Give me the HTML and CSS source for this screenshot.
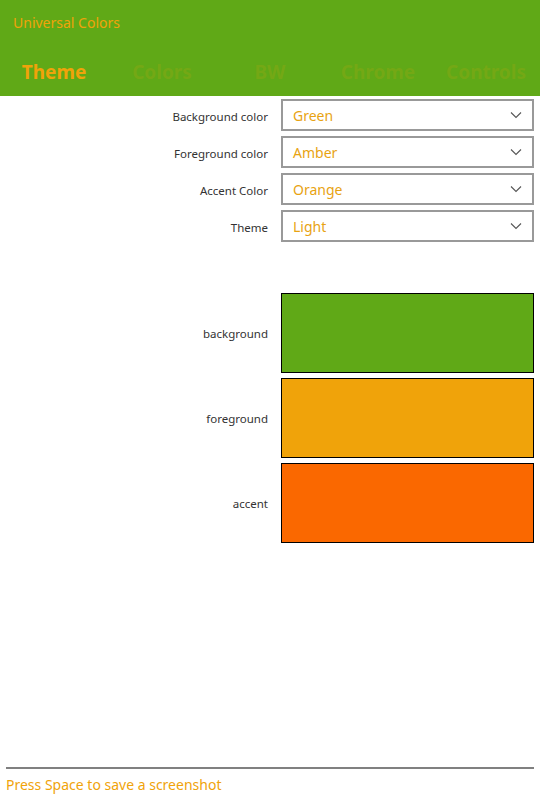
FILE: index.html
```html
<!DOCTYPE html>
<html lang="en">
<head>
  <meta charset="UTF-8">
  <meta name="viewport" content="width=device-width, initial-scale=1.0">
  <title>Universal Colors</title>
  <link rel="stylesheet" href="styles.css">
</head>
<body>
  <div class="app">
    <header class="header">
      <div class="title">Universal Colors</div>
      <nav class="tabs">
        <span class="tab active">Theme</span>
        <span class="tab">Colors</span>
        <span class="tab">BW</span>
        <span class="tab">Chrome</span>
        <span class="tab">Controls</span>
      </nav>
    </header>

    <main class="content">
      <div class="form">
        <label class="label">Background color</label>
        <div class="combo"><span>Green</span><svg class="chevron" viewBox="0 0 12 8"><path d="M1 1.5 L6 6.5 L11 1.5" /></svg></div>
        <label class="label">Foreground color</label>
        <div class="combo"><span>Amber</span><svg class="chevron" viewBox="0 0 12 8"><path d="M1 1.5 L6 6.5 L11 1.5" /></svg></div>
        <label class="label">Accent Color</label>
        <div class="combo"><span>Orange</span><svg class="chevron" viewBox="0 0 12 8"><path d="M1 1.5 L6 6.5 L11 1.5" /></svg></div>
        <label class="label">Theme</label>
        <div class="combo"><span>Light</span><svg class="chevron" viewBox="0 0 12 8"><path d="M1 1.5 L6 6.5 L11 1.5" /></svg></div>
      </div>

      <div class="swatches">
        <span class="label">background</span>
        <div class="swatch green"></div>
        <span class="label">foreground</span>
        <div class="swatch amber"></div>
        <span class="label">accent</span>
        <div class="swatch orange"></div>
      </div>
    </main>

    <footer class="footer">Press Space to save a screenshot</footer>
  </div>
</body>
</html>
```

FILE: styles.css
```css
html, body {
  margin: 0;
  padding: 0;
  background: #fff;
}
body {
  font-family: "Noto Sans", "Open Sans", sans-serif;
}
.app {
  width: 540px;
  height: 800px;
  display: flex;
  flex-direction: column;
}
.header {
  background: #60a917;
  height: 96px;
  box-sizing: border-box;
  padding-top: 13px;
}
.title {
  color: #f0a30a;
  font-size: 14px;
  line-height: 20px;
  padding-left: 13px;
}
.tabs {
  display: grid;
  grid-template-columns: repeat(5, 1fr);
  margin-top: 26px;
}
.tab {
  text-align: center;
  font-size: 19px;
  font-weight: bold;
  line-height: 26px;
  color: #74a815;
}
.tab.active {
  color: #f0a30a;
}
.content {
  flex: 1;
}
.form, .swatches {
  display: grid;
  grid-template-columns: 268px 253px;
  column-gap: 13px;
  row-gap: 5px;
  align-items: center;
}
.form {
  margin-top: 3px;
}
.form .label {
  padding-top: 2px;
}
.swatches {
  margin-top: 51px;
}
.label {
  text-align: right;
  font-size: 11.5px;
  color: #333;
}
.combo {
  height: 32px;
  box-sizing: border-box;
  border: 2px solid #999;
  display: flex;
  align-items: center;
  justify-content: space-between;
  padding: 0 10px 0 10px;
  color: #e8a312;
  font-size: 14px;
}
.chevron {
  width: 12px;
  height: 8px;
  fill: none;
  stroke: #555;
  stroke-width: 1.1;
}
.swatch {
  height: 80px;
  box-sizing: border-box;
  border: 1px solid #000;
}
.green { background: #60a917; }
.amber { background: #f0a30a; }
.orange { background: #fa6800; }
.footer {
  margin: 0 6px 5px;
  border-top: 2px solid #808080;
  color: #f0a30a;
  font-size: 14px;
  line-height: 20px;
  padding-top: 6px;
  height: 20px;
}
```
